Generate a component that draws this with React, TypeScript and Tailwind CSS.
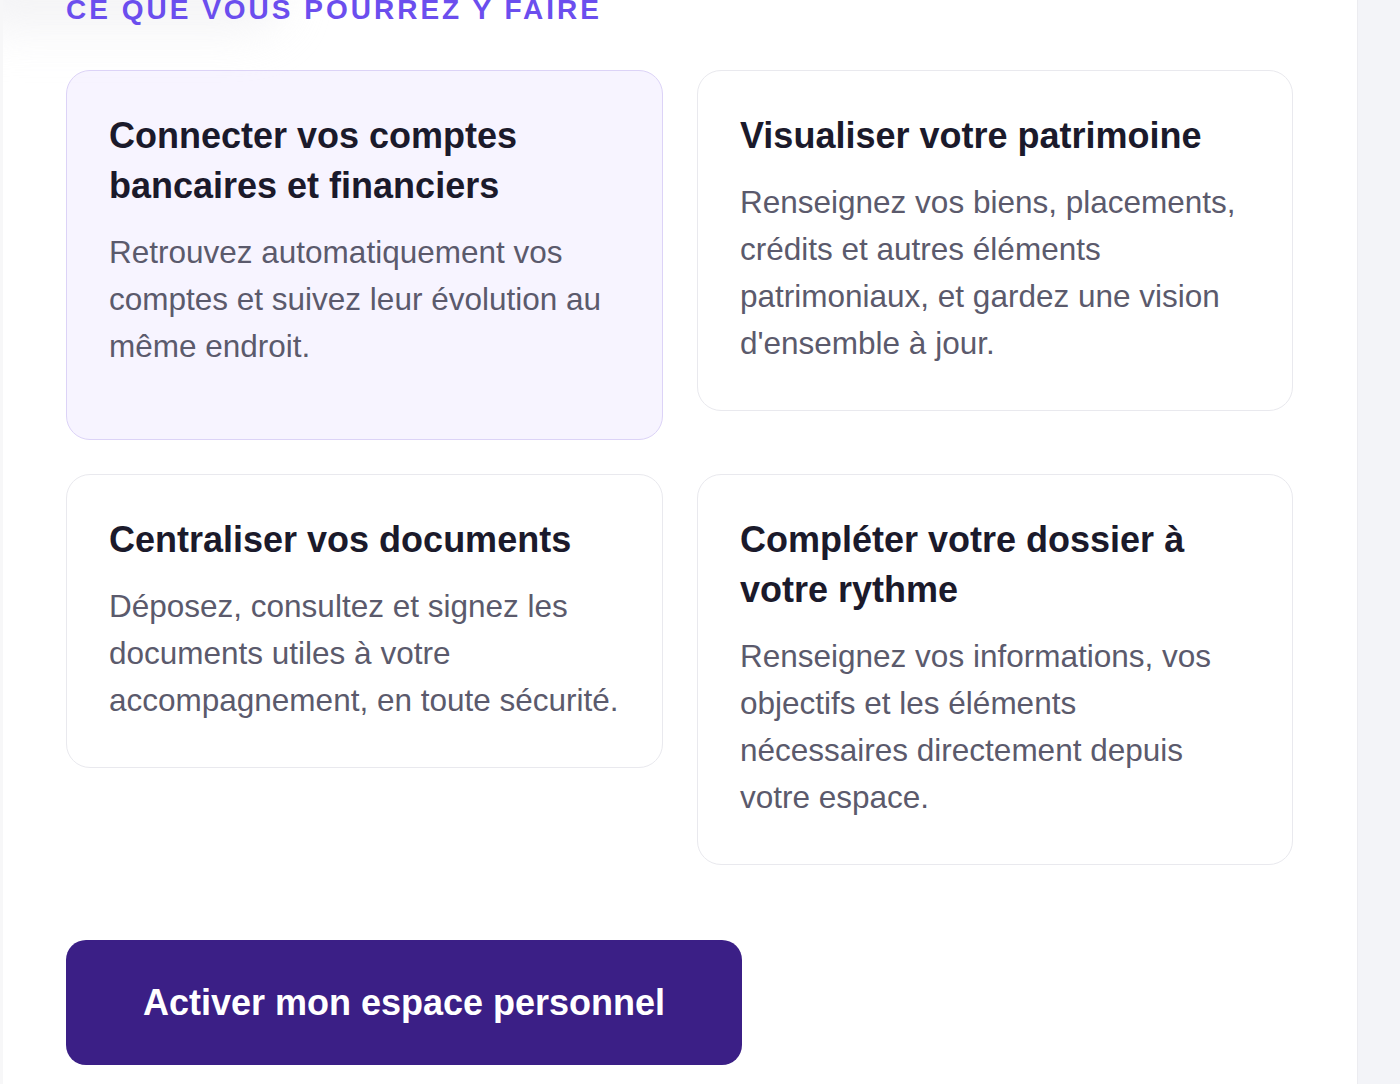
const cards = [
  {
    title: "Connecter vos comptes bancaires et financiers",
    body: "Retrouvez automatiquement vos comptes et suivez leur évolution au même endroit.",
    active: true,
  },
  {
    title: "Visualiser votre patrimoine",
    body: "Renseignez vos biens, placements, crédits et autres éléments patrimoniaux, et gardez une vision d'ensemble à jour.",
  },
  {
    title: "Centraliser vos documents",
    body: "Déposez, consultez et signez les documents utiles à votre accompagnement, en toute sécurité.",
  },
  {
    title: "Compléter votre dossier à votre rythme",
    body: "Renseignez vos informations, vos objectifs et les éléments nécessaires directement depuis votre espace.",
  },
];

function FeatureCard({ title, body, active }: { title: string; body: string; active?: boolean }) {
  return (
    <div
      className={`rounded-[24px] border px-[42px] pt-[40px] pb-[43px] ${
        active ? "min-h-[370px] border-[#dcd3f7] bg-[#f7f4ff]" : "border-[#e9e9ee] bg-white"
      }`}
    >
      <h3 className="text-[36px] font-bold leading-[50px] text-[#1b1a2b]">{title}</h3>
      <p className="mt-[18px] text-[31.5px] leading-[47px] text-[#5b5a6c]">{body}</p>
    </div>
  );
}

export default function App() {
  return (
    <div className="flex min-h-[1084px] bg-white font-['Liberation_Sans',Arial,sans-serif]">
      <main className="relative w-[1357px] shrink-0 overflow-hidden border-l-[3px] border-[#f7f7f8] bg-white pl-[63px]">
        {/* shadow left by the header above */}
        <div className="pointer-events-none absolute -left-[40px] -top-[40px] h-[70px] w-[320px] rounded-full bg-[#ececef] opacity-60 blur-[24px]" />
        <h2 className="relative -mt-[4px] text-[28px] font-bold uppercase leading-[28px] tracking-[3px] text-[#6b4eee]">
          Ce que vous pourrez y faire
        </h2>

        <div className="mt-[46px] grid grid-cols-[597px_596px] items-start gap-[34px]">
          {cards.map((c) => (
            <FeatureCard key={c.title} {...c} />
          ))}
        </div>

        <button className="mt-[75px] flex h-[125px] w-[676px] items-center justify-center rounded-[20px] bg-[#3b1f86] text-[36px] font-bold text-white">
          Activer mon espace personnel
        </button>
      </main>
      <aside className="flex-1 border-l border-[#ececf0] bg-[#f3f4f8]" />
    </div>
  );
}
